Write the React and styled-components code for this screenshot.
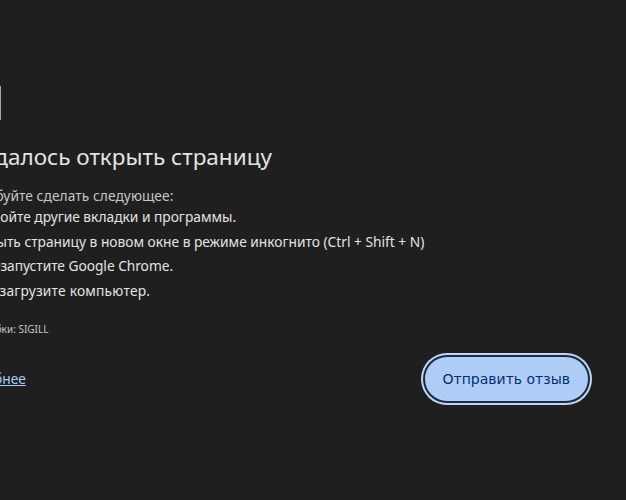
import styled, { createGlobalStyle } from 'styled-components';

const GlobalStyle = createGlobalStyle`
  html, body {
    margin: 0;
    padding: 0;
    height: 100%;
    background: #1f1f1f;
    overflow: hidden;
  }
`;

const Page = styled.div`
  width: 626px;
  height: 500px;
  overflow: hidden;
  background: #1f1f1f;
  color: #e3e3e3;
  font-family: 'Noto Sans', sans-serif;
`;

const Content = styled.div`
  width: 640px;
  margin-left: -48px;
  padding-top: 86px;
`;

const Icon = styled.svg`
  display: block;
  width: 49px;
  height: 34px;
  margin-bottom: 22px;
`;

const Heading = styled.h1`
  margin: 0 0 14px -3px;
  font-size: 22.5px;
  font-weight: 400;
  line-height: 30px;
  color: #e3e3e3;
`;

const Hint = styled.div`
  font-size: 13.75px;
  line-height: 19px;
  letter-spacing: 0.07px;
  color: #c7c7c7;
`;

const Tips = styled.ul`
  list-style: none;
  margin: 0;
  padding: 0 0 0 17px;
`;

const Tip = styled.li`
  margin-left: ${(p) => p.$shift || 0}px;
  font-size: 13.75px;
  line-height: 24.6px;
  letter-spacing: ${(p) => p.$tracking || 0}px;
  color: #e3e3e3;
`;

const ErrorCode = styled.div`
  margin: 18px 0 0 2px;
  font-size: 10px;
  line-height: 16px;
  color: #c7c7c7;
`;

const Footer = styled.div`
  display: flex;
  align-items: center;
  justify-content: space-between;
  width: 636px;
  margin-top: 20px;
`;

const MoreLink = styled.a`
  margin: 0 0 2px -1px;
  font-size: 13.75px;
  color: #a8c7fa;
  text-decoration: underline;
`;

const FeedbackButton = styled.button`
  height: 44px;
  padding: 0 18px;
  border: none;
  border-radius: 22px;
  background: #b0cdf8;
  color: #062e6f;
  font-family: 'DejaVu Sans', sans-serif;
  font-size: 14px;
  box-shadow: 0 0 0 2px #1b2a41, 0 0 0 4px #c2d5f5;
`;

export default function App() {
  return (
    <Page>
      <GlobalStyle />
      <Content>
        <Icon viewBox="0 0 49 34">
          <rect x="1" y="1" width="47" height="32" fill="none" stroke="#a8a8a8" strokeWidth="2" />
        </Icon>
        <Heading>Не удалось открыть страницу</Heading>
        <Hint>Попробуйте сделать следующее:</Hint>
        <Tips>
          <Tip>Закройте другие вкладки и программы.</Tip>
          <Tip $shift={-5}>Открыть страницу в новом окне в режиме инкогнито (Ctrl + Shift + N)</Tip>
          <Tip $shift={-2} $tracking={-0.04}>Перезапустите Google Chrome.</Tip>
          <Tip $shift={-4} $tracking={0.22}>Перезагрузите компьютер.</Tip>
        </Tips>
        <ErrorCode>Код ошибки: SIGILL</ErrorCode>
        <Footer>
          <MoreLink href="#">Подробнее</MoreLink>
          <FeedbackButton>Отправить отзыв</FeedbackButton>
        </Footer>
      </Content>
    </Page>
  );
}
